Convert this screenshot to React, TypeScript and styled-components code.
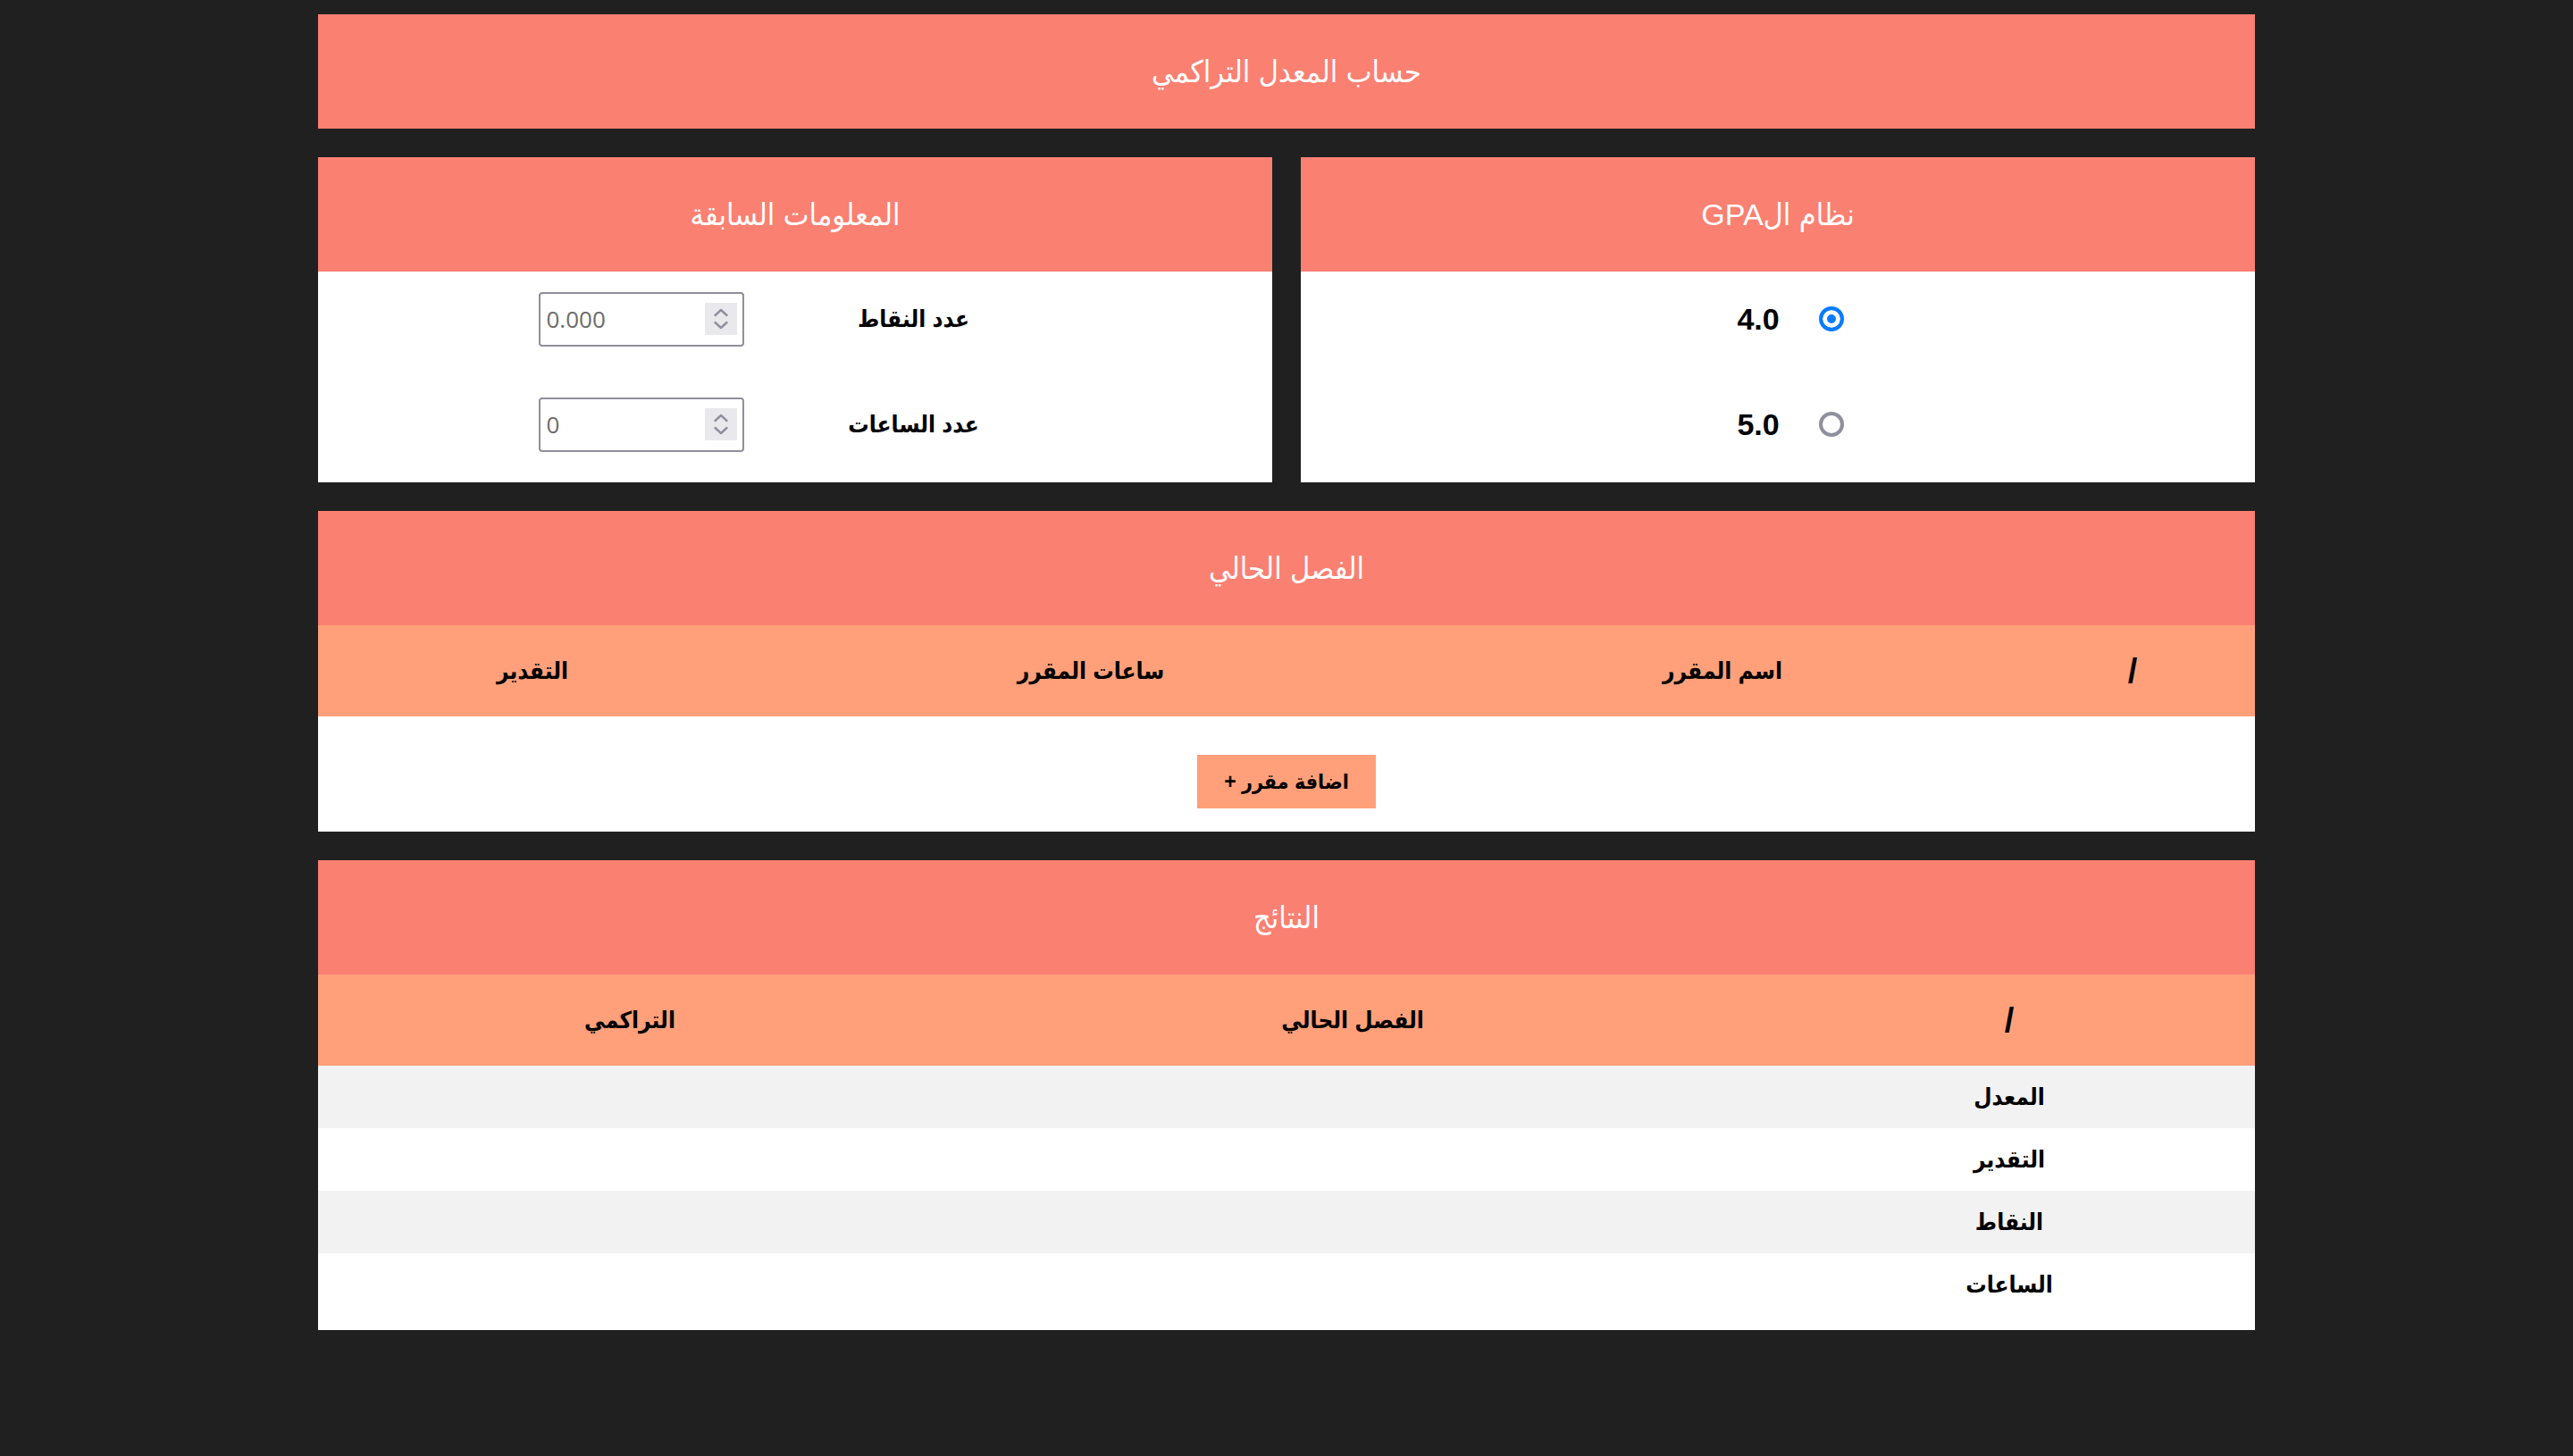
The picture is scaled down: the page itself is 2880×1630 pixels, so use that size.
import React from 'react';
import styled, { createGlobalStyle } from 'styled-components';

const GlobalStyle = createGlobalStyle`
  html, body {
    margin: 0;
    padding: 0;
    background: #202020;
    min-height: 100%;
  }
  body {
    font-family: "Liberation Sans", "DejaVu Sans", sans-serif;
    color: #000;
  }
`;

const Page = styled.main`
  direction: rtl;
  width: 2168px;
  margin: 0 auto;
  padding: 16px 0 140px;
  display: flex;
  flex-direction: column;
  gap: 32px;
`;

const TitleBar = styled.h1`
  margin: 0;
  height: 128px;
  background: #fa8072;
  color: #fff;
  display: flex;
  align-items: center;
  justify-content: center;
  font-size: 34px;
  font-weight: 400;
  font-stretch: condensed;
`;

const TopRow = styled.div`
  display: grid;
  grid-template-columns: 1fr 1fr;
  gap: 32px;
`;

const Card = styled.section`
  background: #fff;
  display: flex;
  flex-direction: column;
`;

const CardHeader = styled.h3`
  margin: 0;
  height: 128px;
  background: #fa8072;
  color: #fff;
  display: flex;
  align-items: center;
  justify-content: center;
  font-size: 34px;
  font-weight: 400;
  font-stretch: condensed;
`;

const FormGrid = styled.div<{ $cols: string; $shift: 'left' | 'right' }>`
  display: grid;
  grid-template-columns: ${(p) => p.$cols};
  grid-auto-rows: 62px;
  row-gap: 56px;
  justify-content: center;
  align-items: center;
  justify-items: center;
  padding: 22px 0 34px;
  ${(p) => (p.$shift === 'left' ? 'padding-right: 40px;' : 'padding-left: 38px;')}
`;

const FieldLabel = styled.label`
  font-size: 26px;
  font-weight: 700;
  font-stretch: condensed;
  white-space: nowrap;
`;

const NumberValue = styled.span`
  font-size: 34px;
  font-weight: 700;
  direction: ltr;
`;

const Radio = styled.input.attrs({ type: 'radio' })`
  appearance: none;
  -webkit-appearance: none;
  margin: 0;
  width: 28px;
  height: 28px;
  box-sizing: border-box;
  border-radius: 50%;
  border: 4px solid #8f8f9d;
  background: #fff;
  &:checked {
    border-color: #0a7cff;
    background: #0a7cff;
    box-shadow: inset 0 0 0 5px #fff;
  }
`;

const NumberBox = styled.div`
  direction: ltr;
  display: flex;
  align-items: center;
  width: 230px;
  height: 61px;
  box-sizing: border-box;
  border: 2px solid #8f8f9d;
  border-radius: 4px;
  padding: 0 6px 0 7px;
  background: #fff;
`;

const NumberInput = styled.input`
  flex: 1;
  min-width: 0;
  border: none;
  outline: none;
  padding: 0;
  background: transparent;
  font-family: "Open Sans", "DejaVu Sans", sans-serif;
  font-size: 26px;
  color: #6b6b6b;
  appearance: textfield;
  -moz-appearance: textfield;
  &::placeholder {
    color: #6b6b6b;
    opacity: 1;
  }
  &::-webkit-inner-spin-button,
  &::-webkit-outer-spin-button {
    -webkit-appearance: none;
    margin: 0;
  }
`;

const Spinner = styled.span`
  width: 36px;
  height: 36px;
  flex: none;
  background: #e9e9ed;
  display: block;
`;

const ColumnsBar = styled.div<{ $cols: string }>`
  display: grid;
  grid-template-columns: ${(p) => p.$cols};
  height: 102px;
  align-items: center;
  background: #ffa07a;
`;

const HeadCell = styled.div`
  text-align: center;
  font-size: 26px;
  font-weight: 700;
  font-stretch: condensed;
  white-space: nowrap;
`;

const Slash = styled(HeadCell)`
  font-size: 38px;
  font-stretch: normal;
`;

const ButtonArea = styled.div`
  display: flex;
  justify-content: center;
  padding: 43px 0 26px;
`;

const AddButton = styled.button`
  width: 200px;
  height: 60px;
  border: none;
  background: #ffa07a;
  font-family: "Liberation Sans", "DejaVu Sans", sans-serif;
  font-size: 23px;
  font-weight: 700;
  font-stretch: condensed;
  color: #000;
  direction: rtl;
  cursor: pointer;
`;

const ResultsBody = styled.div`
  padding-bottom: 16px;
`;

const DataRow = styled.div<{ $cols: string; $striped: boolean }>`
  display: grid;
  grid-template-columns: ${(p) => p.$cols};
  height: 70px;
  align-items: center;
  background: ${(p) => (p.$striped ? '#f2f2f2' : '#fff')};
`;

const RowLabel = styled.div`
  text-align: center;
  font-size: 26px;
  font-weight: 700;
  font-stretch: condensed;
`;

const SpinnerIcon = () => (
  <Spinner>
    <svg width="36" height="36" viewBox="0 0 36 36" fill="none" stroke="#8f8f9d" strokeWidth="2.4" strokeLinecap="round" strokeLinejoin="round">
      <polyline points="11.5,14 18,8 24.5,14" />
      <polyline points="11.5,22 18,28 24.5,22" />
    </svg>
  </Spinner>
);

const semesterCols = '274px 644px 770px 480px';
const resultCols = '550px 920px 698px';
const resultRows = ['المعدل', 'التقدير', 'النقاط', 'الساعات'];

export default function App() {
  return (
    <>
      <GlobalStyle />
      <Page lang="ar">
        <TitleBar>حساب المعدل التراكمي</TitleBar>

        <TopRow>
          <Card>
            <CardHeader>نظام الGPA</CardHeader>
            <FormGrid $cols="82px 82px" $shift="right">
              <Radio name="gpa" defaultChecked aria-label="4.0" />
              <NumberValue>4.0</NumberValue>
              <Radio name="gpa" aria-label="5.0" />
              <NumberValue>5.0</NumberValue>
            </FormGrid>
          </Card>

          <Card>
            <CardHeader>المعلومات السابقة</CardHeader>
            <FormGrid $cols="305px 305px" $shift="left">
              <FieldLabel htmlFor="points">عدد النقاط</FieldLabel>
              <NumberBox>
                <NumberInput id="points" type="number" placeholder="0.000" />
                <SpinnerIcon />
              </NumberBox>
              <FieldLabel htmlFor="hours">عدد الساعات</FieldLabel>
              <NumberBox>
                <NumberInput id="hours" type="number" placeholder="0" />
                <SpinnerIcon />
              </NumberBox>
            </FormGrid>
          </Card>
        </TopRow>

        <Card>
          <CardHeader>الفصل الحالي</CardHeader>
          <ColumnsBar $cols={semesterCols}>
            <Slash>/</Slash>
            <HeadCell>اسم المقرر</HeadCell>
            <HeadCell>ساعات المقرر</HeadCell>
            <HeadCell>التقدير</HeadCell>
          </ColumnsBar>
          <ButtonArea>
            <AddButton type="button">اضافة مقرر +</AddButton>
          </ButtonArea>
        </Card>

        <Card>
          <CardHeader>النتائج</CardHeader>
          <ColumnsBar $cols={resultCols}>
            <Slash>/</Slash>
            <HeadCell>الفصل الحالي</HeadCell>
            <HeadCell>التراكمي</HeadCell>
          </ColumnsBar>
          <ResultsBody>
            {resultRows.map((label, i) => (
              <DataRow key={label} $cols={resultCols} $striped={i % 2 === 0}>
                <RowLabel>{label}</RowLabel>
                <div />
                <div />
              </DataRow>
            ))}
          </ResultsBody>
        </Card>
      </Page>
    </>
  );
}
